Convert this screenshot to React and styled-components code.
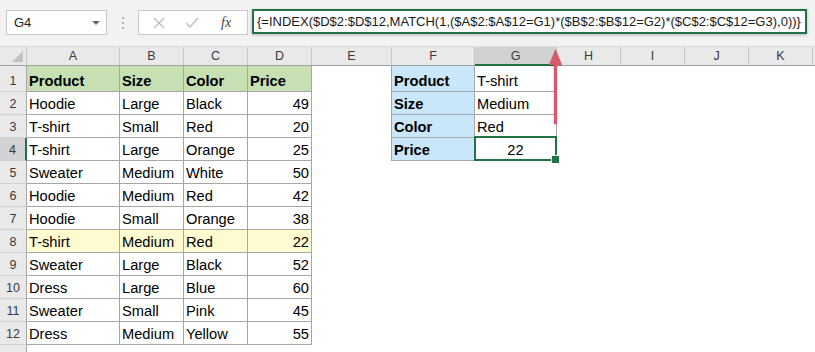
import styled, { createGlobalStyle } from "styled-components";

const GlobalStyle = createGlobalStyle`
  body {
    margin: 0;
    background: #ffffff;
    overflow: hidden;
  }
  * {
    box-sizing: border-box;
  }
`;

const GREEN = "#217346";
const LINE = "#a6a6a6";

const Page = styled.div`
  position: relative;
  width: 815px;
  height: 352px;
  overflow: hidden;
  font-family: "Liberation Sans", Arial, sans-serif;
  background: #fff;
`;

const Toolbar = styled.div`
  height: 47px;
  display: flex;
  align-items: flex-start;
  padding: 9px 0 0 6px;
  background: #f2f2f2;
  border-bottom: 1px solid #dadada;
`;

const NameBox = styled.div`
  width: 101px;
  height: 25px;
  margin-top: 1px;
  display: flex;
  align-items: center;
  justify-content: space-between;
  padding: 0 6px 0 7px;
  background: #fff;
  border: 1px solid #c8c8c8;
  font-size: 13px;
  color: #222;
`;

const DropArrow = styled.span`
  width: 0;
  height: 0;
  border-left: 4px solid transparent;
  border-right: 4px solid transparent;
  border-top: 4px solid #6a6a6a;
`;

const Grip = styled.div`
  width: 31px;
  height: 25px;
  margin-top: 1px;
  display: flex;
  flex-direction: column;
  align-items: center;
  justify-content: center;
  gap: 3px;

  > span {
    width: 2px;
    height: 2px;
    background: #b5b5b5;
  }
`;

const FxBox = styled.div`
  width: 110px;
  height: 25px;
  margin-top: 1px;
  display: flex;
  align-items: center;
  padding-left: 14px;
  gap: 20px;
  background: #fff;
  border: 1px solid #c8c8c8;
`;

const FxLabel = styled.span`
  font-family: "Liberation Serif", "Times New Roman", serif;
  font-style: italic;
  font-size: 14px;
  color: #444;
  margin-left: 2px;
`;

const FormulaBar = styled.div`
  width: 555px;
  height: 25px;
  margin-left: 4px;
  display: flex;
  align-items: flex-end;
  padding: 0 0 3px 3px;
  background: #fff;
  border: 2px solid ${GREEN};
  box-shadow: 0 1px 3px rgba(0, 0, 0, 0.25);
  font-size: 13px;
  color: #1a1a1a;
  white-space: nowrap;
`;

const Sheet = styled.div`
  display: grid;
  grid-template-columns: 27px 93px 64px 64px 64px 80px 83px 82px 64px 64px 64px 64px 1fr;
  grid-template-rows: 19px 26px repeat(12, 23px) 23px;
`;

const Corner = styled.div`
  position: relative;
  background: #e9e9e9;
  border-right: 1px solid #c8c8c8;
  border-bottom: 1px solid #a0a0a0;

  &::after {
    content: "";
    position: absolute;
    right: 3px;
    bottom: 3px;
    width: 11px;
    height: 11px;
    background: #c2c2c2;
    clip-path: polygon(100% 0, 100% 100%, 0 100%);
  }
`;

const ColHead = styled.div`
  display: flex;
  align-items: center;
  justify-content: center;
  font-size: 12.5px;
  color: #3a3a3a;
  background: ${(p) => (p.$active ? "#d2d2d2" : "#e9e9e9")};
  border-right: 1px solid #c8c8c8;
  border-bottom: ${(p) => (p.$active ? `2px solid ${GREEN}` : "1px solid #a0a0a0")};
`;

const RowHead = styled.div`
  display: flex;
  align-items: flex-end;
  justify-content: center;
  padding-bottom: 3px;
  font-size: 12.5px;
  color: #3a3a3a;
  background: ${(p) => (p.$active ? "#d2d2d2" : "#e9e9e9")};
  border-right: ${(p) => (p.$active ? `2px solid ${GREEN}` : "1px solid #a8a8a8")};
  border-bottom: 1px solid #d0d0d0;
`;

const Cell = styled.div`
  position: relative;
  display: flex;
  align-items: flex-end;
  justify-content: ${(p) =>
    p.$align === "right" ? "flex-end" : p.$align === "center" ? "center" : "flex-start"};
  padding: 0 2px 2px 2px;
  font-size: 14.67px;
  font-weight: ${(p) => (p.$bold ? 700 : 400)};
  color: #000;
  white-space: nowrap;
  background: ${(p) => p.$fill || "#fff"};
  border-right: ${(p) => (p.$br ? `1px solid ${LINE}` : "none")};
  border-bottom: ${(p) => (p.$bb ? `1px solid ${LINE}` : "none")};

  ${(p) =>
    p.$selected &&
    `
    &::after {
      content: "";
      position: absolute;
      top: -2px;
      left: -1px;
      right: -1px;
      bottom: -1px;
      border: 2px solid ${GREEN};
    }
    &::before {
      content: "";
      position: absolute;
      right: -4px;
      bottom: -4px;
      width: 7px;
      height: 7px;
      background: ${GREEN};
      border: 1px solid #fff;
      z-index: 1;
    }
  `}
`;

const Arrow = styled.svg`
  position: absolute;
  left: 547px;
  top: 47px;
  filter: drop-shadow(0 1px 1px rgba(0, 0, 0, 0.2));
`;

const COLS = ["A", "B", "C", "D", "E", "F", "G", "H", "I", "J", "K"];

const data = [
  ["Hoodie", "Large", "Black", 49],
  ["T-shirt", "Small", "Red", 20],
  ["T-shirt", "Large", "Orange", 25],
  ["Sweater", "Medium", "White", 50],
  ["Hoodie", "Medium", "Red", 42],
  ["Hoodie", "Small", "Orange", 38],
  ["T-shirt", "Medium", "Red", 22],
  ["Sweater", "Large", "Black", 52],
  ["Dress", "Large", "Blue", 60],
  ["Sweater", "Small", "Pink", 45],
  ["Dress", "Medium", "Yellow", 55],
];

const lookup = [
  ["Product", "T-shirt"],
  ["Size", "Medium"],
  ["Color", "Red"],
  ["Price", 22],
];

const formula =
  "{=INDEX($D$2:$D$12,MATCH(1,($A$2:$A$12=G1)*($B$2:$B$12=G2)*($C$2:$C$12=G3),0))}";

function Row({ n }) {
  const isHeader = n === 1;
  const rec = n >= 2 && n <= 12 ? data[n - 2] : null;
  const inTable = n <= 12;
  const fill = isHeader ? "#c6e0b4" : n === 8 ? "#fefbd0" : undefined;
  const look = n <= 4 ? lookup[n - 1] : null;

  const left = isHeader ? ["Product", "Size", "Color", "Price"] : rec;

  return (
    <>
      <RowHead $active={n === 4}>{n}</RowHead>
      {[0, 1, 2, 3].map((i) => (
        <Cell
          key={i}
          $br={inTable}
          $bb={inTable}
          $bold={isHeader}
          $fill={fill}
          $align={!isHeader && i === 3 ? "right" : "left"}
        >
          {left ? left[i] : ""}
        </Cell>
      ))}
      <Cell $br={!!look} />
      <Cell $br={!!look} $bb={!!look} $bold $fill={look ? "#cae6fa" : undefined}>
        {look ? look[0] : ""}
      </Cell>
      <Cell
        $br={!!look}
        $bb={!!look}
        $align={n === 4 ? "center" : "left"}
        $selected={n === 4}
      >
        {look ? look[1] : ""}
      </Cell>
      <Cell />
      <Cell />
      <Cell />
      <Cell />
      <Cell />
    </>
  );
}

export default function App() {
  return (
    <Page>
      <GlobalStyle />
      <Toolbar>
        <NameBox>
          <span>G4</span>
          <DropArrow />
        </NameBox>
        <Grip>
          <span />
          <span />
          <span />
        </Grip>
        <FxBox>
          <svg width="12" height="12" viewBox="0 0 12 12">
            <path d="M1 1L11 11M11 1L1 11" stroke="#bdbdbd" strokeWidth="1.3" fill="none" />
          </svg>
          <svg width="14" height="11" viewBox="0 0 14 11">
            <path d="M1 6L5 10L13 1" stroke="#bdbdbd" strokeWidth="1.3" fill="none" />
          </svg>
          <FxLabel>fx</FxLabel>
        </FxBox>
        <FormulaBar>{formula}</FormulaBar>
      </Toolbar>
      <Sheet>
        <Corner />
        {COLS.map((c) => (
          <ColHead key={c} $active={c === "G"}>
            {c}
          </ColHead>
        ))}
        <ColHead />
        {Array.from({ length: 13 }, (_, i) => (
          <Row key={i} n={i + 1} />
        ))}
      </Sheet>
      <Arrow width="18" height="80" viewBox="0 0 18 80">
        <path d="M8.5 16V77" stroke="#d7586d" strokeWidth="3" fill="none" />
        <path d="M8.5 2L15 18H2Z" fill="#d7586d" />
      </Arrow>
    </Page>
  );
}
